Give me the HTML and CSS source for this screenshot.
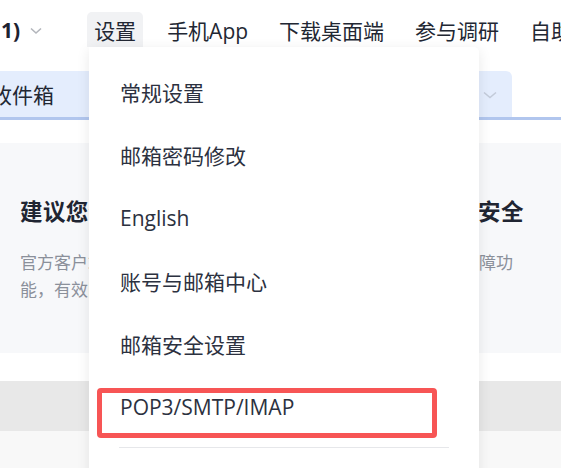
FILE: index.html
```html
<!DOCTYPE html>
<html lang="zh-CN">
<head>
<meta charset="utf-8">
<link rel="stylesheet" href="styles.css">
</head>
<body>
<div class="page">
  <header class="topnav">
    <div class="acct"><span class="acct-name">1)</span>
      <svg class="chev" width="12" height="8" viewBox="0 0 12 8"><path d="M1 1.5 L6 6 L11 1.5" fill="none" stroke="#b3b6bc" stroke-width="1.6"/></svg>
    </div>
    <span class="sep"></span>
    <nav class="links">
      <span class="link active">设置</span>
      <span class="link">手机App</span>
      <span class="link">下载桌面端</span>
      <span class="link">参与调研</span>
      <span class="link">自助查询</span>
    </nav>
  </header>

  <div class="tabbar">
    <div class="tab">
      <span class="tab-label">收件箱</span>
      <svg class="tab-chev" width="14" height="8" viewBox="0 0 14 8"><path d="M1 1.5 L7 6.5 L13 1.5" fill="none" stroke="#c3cbd9" stroke-width="1.6"/></svg>
    </div>
  </div>

  <section class="card">
    <h2 class="card-title">建议您使用官方客户端，全面保障您邮箱账号安全</h2>
    <p class="card-desc">官方客户端支持扫码登录、异地登录提醒、设备管理等多重保障功能，有效防止账号被盗用。</p>
  </section>

  <div class="spacer"></div>
  <div class="band"></div>
  <div class="rest"></div>

  <div class="dropdown">
    <ul class="menu">
      <li class="menu-item">常规设置</li>
      <li class="menu-item">邮箱密码修改</li>
      <li class="menu-item">English</li>
      <li class="menu-item">账号与邮箱中心</li>
      <li class="menu-item">邮箱安全设置</li>
      <li class="menu-item">POP3/SMTP/IMAP</li>
    </ul>
    <div class="menu-divider"></div>
  </div>

  <div class="highlight"></div>
</div>
</body>
</html>
```

FILE: styles.css
```css
* { box-sizing: border-box; }

html, body {
  margin: 0;
  padding: 0;
  background: #ffffff;
  overflow: hidden;
}

body {
  font-family: "Open Sans", "Noto Sans CJK SC", sans-serif;
  color: #262b36;
}

.page {
  position: relative;
  width: 561px;
  height: 468px;
  overflow: hidden;
}

/* ---------- top navigation ---------- */
.topnav {
  height: 47px;
  display: flex;
  align-items: flex-end;
  white-space: nowrap;
}

.acct {
  height: 35px;
  display: flex;
  align-items: center;
  padding-left: 1px;
}

.acct-name {
  font-size: 21px;
  font-weight: 700;
  color: #1d2230;
}

.chev {
  margin-left: 10px;
  margin-top: 2px;
}

.sep {
  align-self: center;
  width: 2px;
  height: 20px;
  margin-left: 25px;
  margin-top: 14px;
  background: #d3d6db;
}

.links {
  display: flex;
  gap: 17px;
  margin-left: 20px;
}

.link {
  height: 35px;
  padding: 0 7px;
  display: flex;
  align-items: center;
  font-size: 21px;
  color: #222733;
  border-radius: 5px 5px 0 0;
}

.link.active {
  background: #f1f2f4;
}

.link.wide {
  letter-spacing: 0.5px;
}

/* ---------- folder tab ---------- */
.tabbar {
  margin-top: 24px;
  height: 49px;
  border-bottom: 3px solid #b1c6ee;
  display: flex;
  align-items: flex-end;
}

.tab {
  width: 532px;
  margin-left: -20px;
  height: 46px;
  padding-left: 11px;
  padding-right: 15px;
  background: #e4edfd;
  border-radius: 0 6px 0 0;
  display: flex;
  align-items: center;
  justify-content: space-between;
}

.tab-label {
  font-size: 21px;
  color: #222733;
}

.tab-chev {
  margin-top: 2px;
}

/* ---------- card ---------- */
.card {
  margin-top: 23px;
  height: 210px;
  background: #f7f8fa;
  padding: 52px 41px 0 20px;
}

.card-title {
  margin: 0;
  font-size: 22.5px;
  line-height: 34px;
  font-weight: 700;
  letter-spacing: 0.4px;
  color: #202532;
  white-space: nowrap;
}

.card-desc {
  margin: 20px 0 0;
  font-size: 17px;
  line-height: 27px;
  color: #8b909a;
}

.spacer { height: 28px; background: #ffffff; }
.band { height: 50px; background: #e8e8e8; }
.rest { height: 60px; background: #f8f8f8; }

/* ---------- dropdown menu (overlay) ---------- */
.dropdown {
  position: absolute;
  left: 89px;
  top: 47px;
  width: 390px;
  height: 460px;
  background: #ffffff;
  border-radius: 0 5px 0 0;
  box-shadow: 0 3px 14px rgba(0, 0, 0, 0.09);
  padding-top: 13px;
}

.menu {
  list-style: none;
  margin: 0;
  padding: 0;
}

.menu-item {
  height: 63px;
  padding-left: 31px;
  display: flex;
  align-items: center;
  font-size: 21px;
  color: #2c3140;
}

.menu-divider {
  margin: 9px 30px 0;
  height: 1px;
  background: #e6e7ea;
}

/* ---------- red annotation box ---------- */
.highlight {
  position: absolute;
  left: 97px;
  top: 388px;
  width: 340px;
  height: 50px;
  border: 5px solid #f75555;
  border-radius: 4px;
}
```
